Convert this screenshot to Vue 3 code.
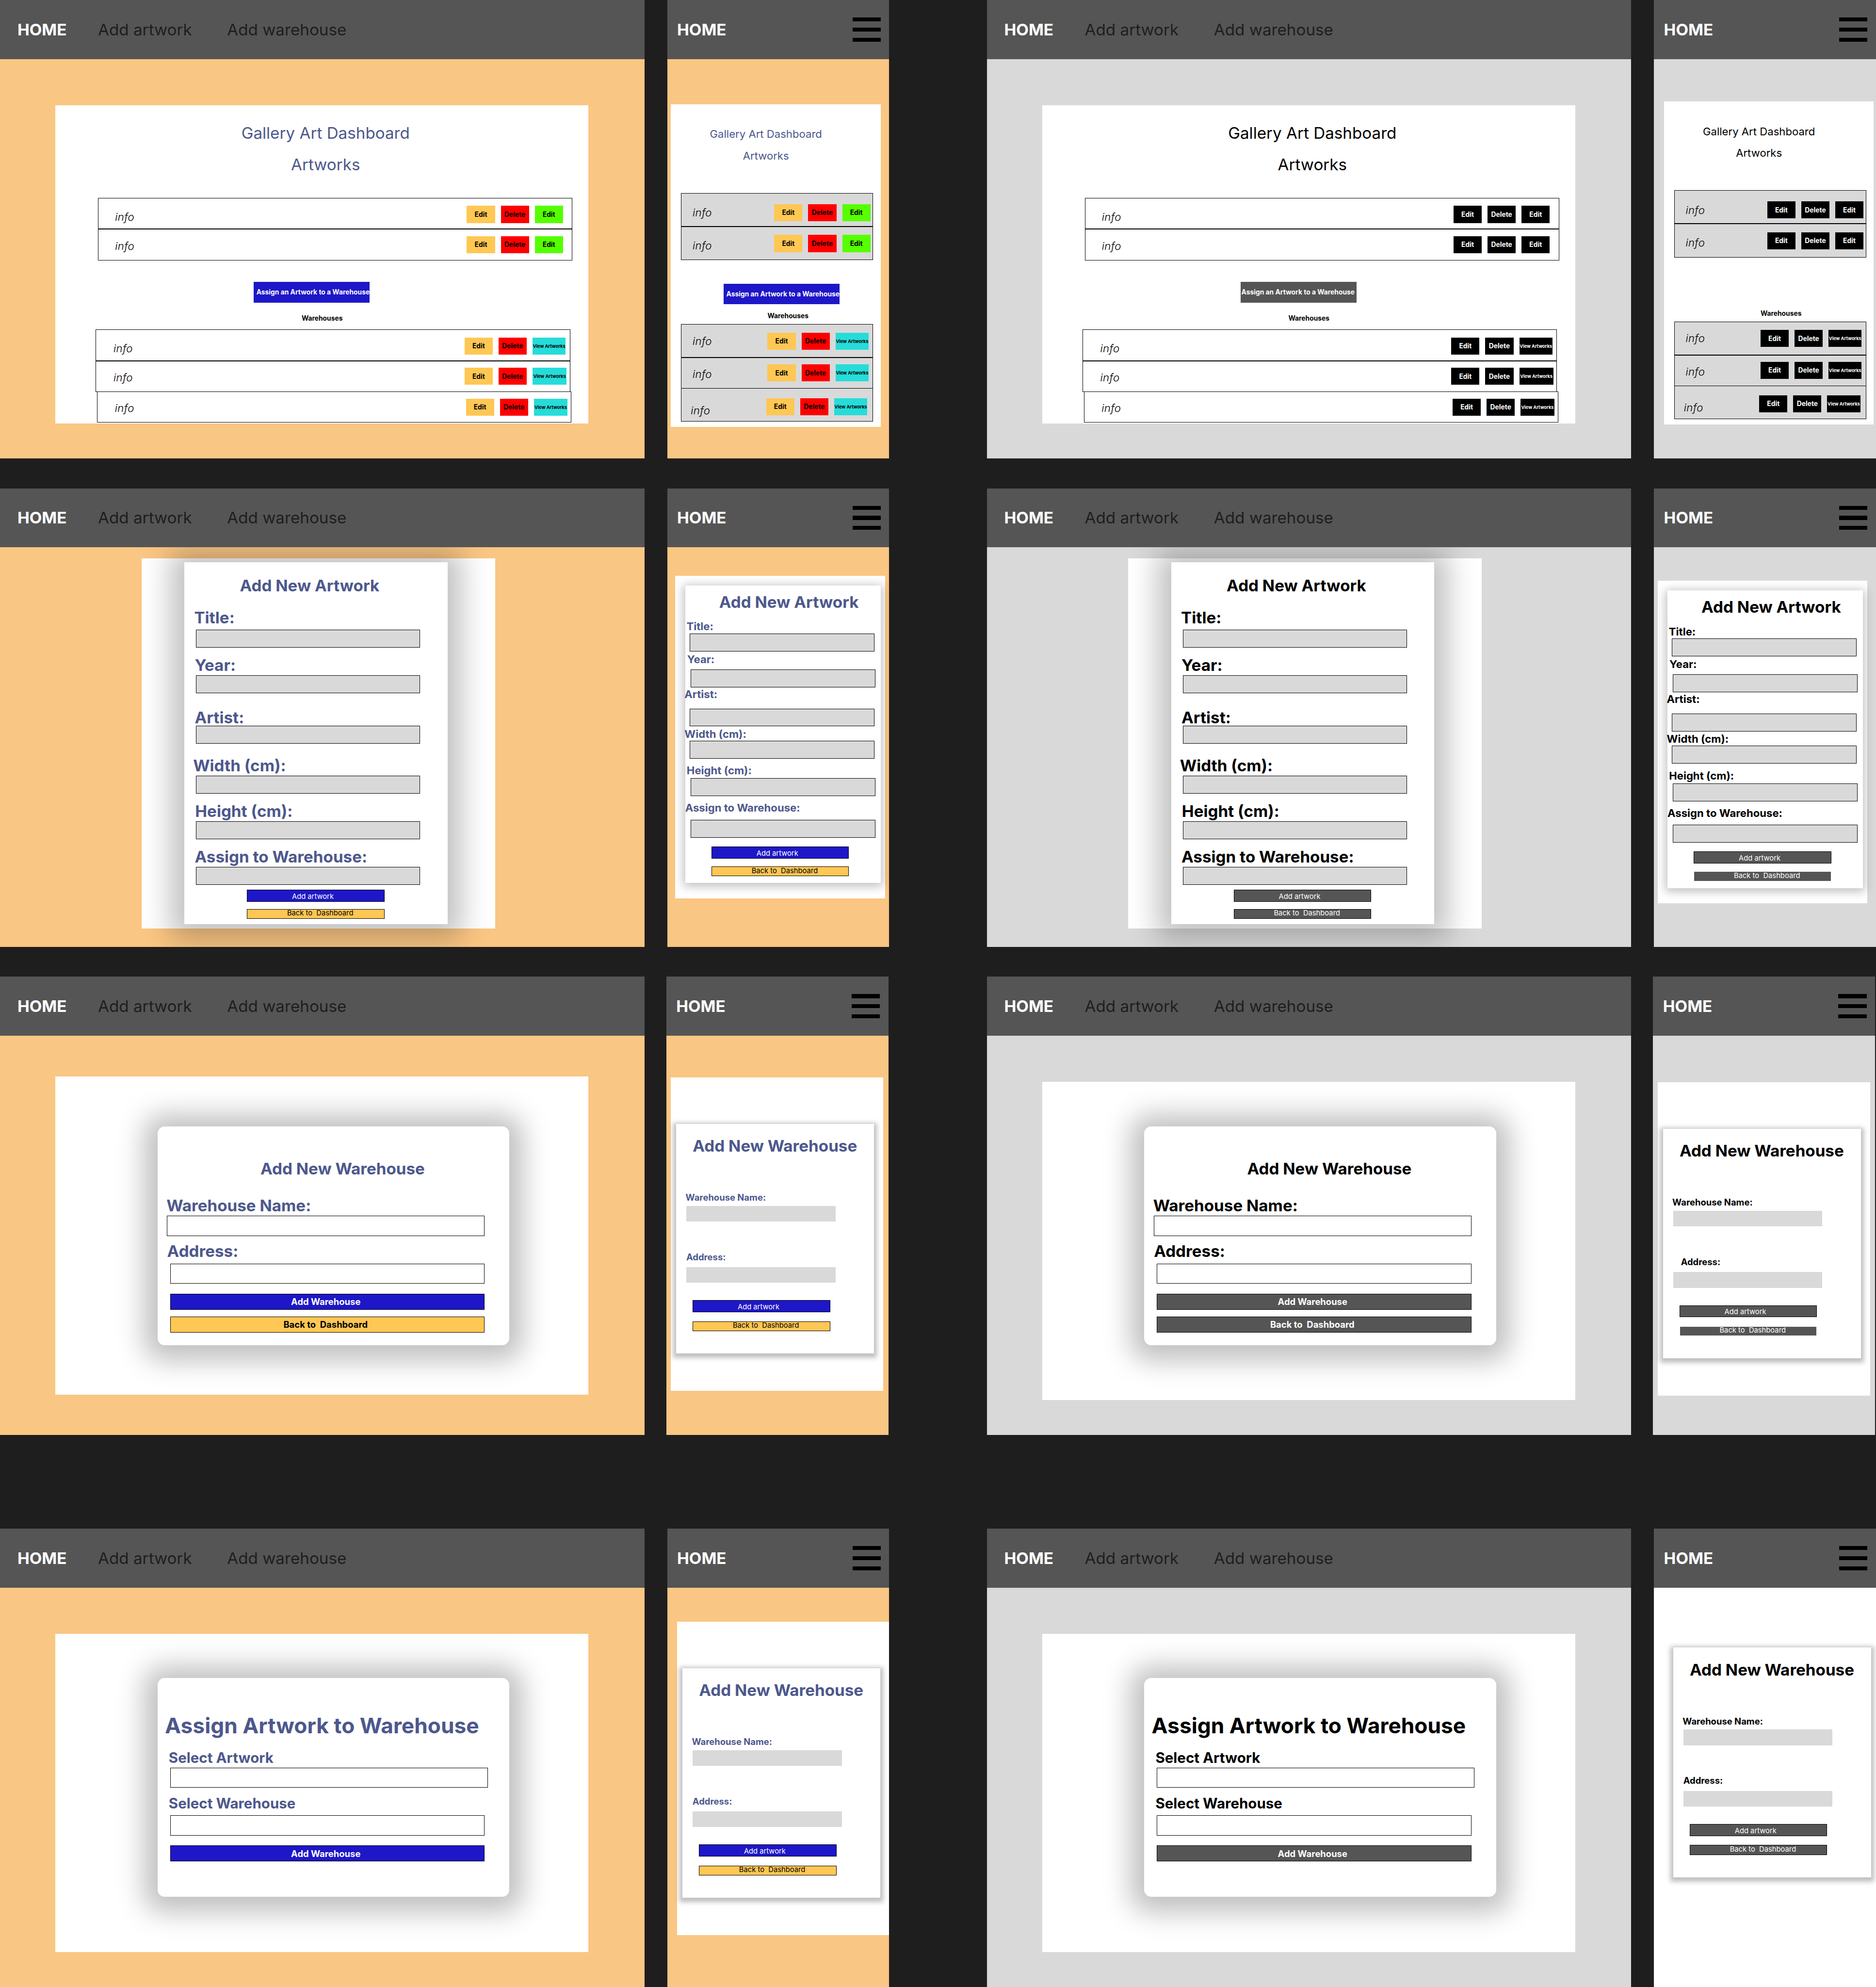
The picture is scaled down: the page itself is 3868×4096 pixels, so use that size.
<script setup>
const screens = ['dashboard', 'artwork', 'warehouse', 'assign']
const themes = ['color', 'mono']

const artworkFields = ['Title:', 'Year:', 'Artist:', 'Width (cm):', 'Height (cm):', 'Assign to Warehouse:']
const warehouseFields = ['Warehouse Name:', 'Address:']
const assignFields = ['Select Artwork', 'Select Warehouse']

const desktopForms = {
  artwork: {
    title: 'Add New Artwork',
    fields: artworkFields,
    actions: ['Add artwork', 'Back to  Dashboard'],
  },
  warehouse: {
    title: 'Add New Warehouse',
    fields: warehouseFields,
    actions: ['Add Warehouse', 'Back to  Dashboard'],
  },
  assign: {
    title: 'Assign Artwork to Warehouse',
    fields: assignFields,
    actions: ['Add Warehouse'],
  },
}

const mobileWarehouse = {
  title: 'Add New Warehouse',
  fields: warehouseFields,
  actions: ['Add artwork', 'Back to  Dashboard'],
}

const mobileForms = {
  artwork: desktopForms.artwork,
  warehouse: mobileWarehouse,
  assign: mobileWarehouse,
}

const devices = [
  { name: 'desktop', forms: desktopForms },
  { name: 'mobile', forms: mobileForms },
]

const showAssign = (device, theme) => !(device === 'mobile' && theme === 'mono')
</script>

<template>
  <main class="board">
    <section v-for="screen in screens" :key="screen" class="row" :class="screen">
      <div v-for="theme in themes" :key="theme" class="pair" :class="theme">
        <article v-for="device in devices" :key="device.name" class="frame" :class="device.name">
          <header class="nav">
            <strong class="home">HOME</strong>
            <template v-if="device.name === 'desktop'">
              <a class="link first">Add artwork</a>
              <a class="link">Add warehouse</a>
            </template>
            <span v-else class="menu"><i></i><i></i><i></i></span>
          </header>

          <div v-if="screen === 'dashboard'" class="panel">
            <h1 class="heading">Gallery Art Dashboard</h1>
            <h2 class="heading sub">Artworks</h2>
            <ul class="list artworks">
              <li v-for="n in 2" :key="n" class="item">
                <em class="info">info</em>
                <button class="btn yellow">Edit</button>
                <button class="btn red">Delete</button>
                <button class="btn green">Edit</button>
              </li>
            </ul>
            <button v-if="showAssign(device.name, theme)" class="assign-btn">Assign an Artwork to a Warehouse</button>
            <h3 class="caption">Warehouses</h3>
            <ul class="list houses">
              <li v-for="n in 3" :key="n" class="item">
                <em class="info">info</em>
                <button class="btn yellow">Edit</button>
                <button class="btn red">Delete</button>
                <button class="btn view">View Artworks</button>
              </li>
            </ul>
          </div>

          <div v-else class="panel">
            <form class="card">
              <h1 class="title">{{ device.forms[screen].title }}</h1>
              <div v-for="field in device.forms[screen].fields" :key="field" class="field">
                <label class="label">{{ field }}</label>
                <span class="input"></span>
              </div>
              <div
                v-for="(action, i) in device.forms[screen].actions"
                :key="action"
                class="action"
                :class="i ? 'back' : 'submit'"
              ><span class="action-text">{{ action }}</span></div>
            </form>
          </div>
        </article>
      </div>
    </section>
  </main>
</template>

<style>
body {
  margin: 0;
  background: #1e1e1e;
  overflow: hidden;
}
</style>

<style scoped>
.board {
  zoom: 0.92272;
  width: 4192px;
  height: 4439px;
  overflow: hidden;
  background: #1e1e1e;
  font-family: Inter, 'Liberation Sans', sans-serif;
  color: #000;
  white-space: pre;
}
.board * { box-sizing: border-box; }
h1, h2, h3, ul { margin: 0; padding: 0; list-style: none; }
button { border: 0; padding: 0; font-family: inherit; color: inherit; white-space: pre; }

/* board grid */
.row { display: flex; height: 1024px; gap: 218px; margin-bottom: 67px; }
.row.warehouse { gap: 220px; margin-bottom: 209px; }
.pair { display: flex; gap: 51px; }
.warehouse .pair { gap: 49px; }
.frame { height: 1024px; overflow: hidden; display: flex; flex-direction: column; align-items: flex-start; flex: none; }
.desktop { width: 1440px; }
.mobile { width: 496px; }
.color .frame { background: #fac683; }
.mono .frame { background: #d9d9d9; }
.assign .mono .mobile { background: #fff; }

/* navigation */
.nav {
  display: flex; align-items: center; width: 100%; height: 132px; flex: none;
  background: #555; font-size: 36px; line-height: 44px; padding-left: 39px;
  position: relative; z-index: 1;
}
.home { width: 180px; color: #fff; font-weight: 700; }
.link { font-weight: 400; color: #1e1e1e; }
.link.first { width: 288.5px; }
.mobile .nav { padding: 0 19px 0 22px; justify-content: space-between; }
.menu { display: flex; flex-direction: column; gap: 13.5px; width: 63px; }
.menu i { height: 9px; background: #000; }

/* panels */
.panel { background: #fff; display: flex; flex-direction: column; align-items: flex-start; flex: none; }
.desktop .panel { width: 1191px; height: 711px; margin: 103px 0 0 124px; }
.artwork .desktop .panel { width: 790px; height: 827px; margin: 24px 0 0 316px; }
.warehouse .desktop .panel { margin-top: 91px; }
.warehouse .mono.pair .desktop .panel { margin-top: 103px; }
.dashboard .mobile .panel { width: 469px; height: 721px; margin: 101px 0 0 8px; }
.dashboard .mono .mobile .panel { margin: 95px 0 0 22px; }
.artwork .mobile .panel { width: 469px; height: 721px; margin: 63px 0 0 18px; }
.artwork .mono .mobile .panel { margin: 74px 0 0 8px; }
.warehouse .mobile .panel { width: 475px; height: 700px; margin: 93px 0 0 10px; }
.warehouse .mono .mobile .panel { margin-top: 104px; }
.assign .mobile .panel { width: 475px; height: 700px; margin: 76px 0 0 22px; }
.assign .mono .mobile .panel { margin: 30px 0 0 31px; }

/* dashboard */
.heading { font-weight: 400; width: 100%; text-align: center; font-size: 36px; line-height: 44px; padding-left: 16px; margin-top: 40px; }
.heading.sub { margin-top: 26.5px; }
.mobile .heading { font-size: 24px; line-height: 29px; padding: 0 44px 0 0; margin-top: 52.5px; }
.mobile .heading.sub { margin-top: 19px; }
.color .heading, .color .title, .color .label { color: #4d588c; }

.list { width: 1060px; }
.artworks { margin: 52.5px 0 0 95px; }
.houses { margin: 15.5px 0 0 90px; }
.item { display: flex; align-items: flex-start; gap: 13px; height: 70px; padding-top: 15px; border: 1px solid #000; background: #fff; }
.item:first-child { padding-top: 17px; }
.houses .item:nth-child(3) { margin: -1.5px -3px 0 3px; }
.info { flex: none; width: 810px; padding-left: 37px; margin-top: 7px; font-size: 24px; line-height: 29px; font-weight: 300; letter-spacing: 0.4px; }
.houses .info { padding-left: 38.5px; }
.item:first-child .info { margin-top: 10.5px; }
.btn { width: 63px; height: 38px; flex: none; font-size: 15px; font-weight: 700; line-height: 18px; display: flex; align-items: center; justify-content: center; }
.view { width: 74px; font-size: 10px; line-height: 12px; }
.desktop .item:nth-child(2) .view { width: 76px; }
.desktop .item:nth-child(3) .view { width: 75px; }
.yellow { background: #ffc753; }
.red { background: #f00; }
.green { background: #5f0; }
.view { background: #26dcd9; }
.mono .btn { background: #000; color: #fff; }
.assign-btn { width: 259px; height: 46px; margin: 48px 0 0 443px; padding-left: 6px; text-align: left; background: #1e17c8; color: #fff; font-size: 15px; font-weight: 700; line-height: 18px; }
.mono .assign-btn { background: #555; padding-left: 2px; }
.caption { font-size: 15px; line-height: 18px; font-weight: 700; margin: 26.5px 0 0 550px; }

.mobile .list { width: 429px; margin-left: 23px; }
.mobile .artworks { margin-top: 68.5px; }
.mobile .houses { margin-top: 9px; }
.mobile .item { height: 75px; background: #d9d9d9; padding-top: 18px; }
.mobile .item:first-child { padding-top: 24px; }
.mobile .info { width: 194px; padding-left: 24.5px; margin-top: 9px; }
.mobile .item:first-child .info { margin-top: 5px; }
.mobile .houses .info { width: 179px; }
.mobile .houses .item:first-child { padding-top: 18px; }
.mobile .houses .item:first-child .info { margin-top: 4px; }
.mobile .houses .item:nth-child(2) { padding-top: 14px; }
.mobile .houses .item:nth-child(2) .info { margin-top: 7.5px; }
.mobile .houses .item:nth-child(3) { padding-top: 21px; margin: -7px 0 0; }
.mobile .houses .item:nth-child(3) .info { width: 176px; padding-left: 20.5px; margin-top: 13px; }
.mobile .view.view { width: 74px; }
.mobile .assign-btn { margin: 53px 0 0 118px; }
.mobile .caption { margin: 17.3px 0 0 216px; }
.mono .mobile .caption { margin-top: 116.3px; }

/* form cards */
.card { background: #fff; display: flex; flex-direction: column; align-items: flex-start; flex: none; }
.title { font-weight: 700; font-size: 36px; line-height: 44px; height: 44px; padding-top: 1px; }
.field { display: flex; flex-direction: column; align-items: flex-start; }
.label { font-weight: 700; font-size: 36px; line-height: 44px; height: 44px; padding-top: 0.5px; }
.input { border: 1px solid #000; }
.action { border: 1px solid #000; display: flex; justify-content: center; align-items: center; font-size: 16px; line-height: 19px; width: 307px; }
.submit { background: #1e17c8; color: #fff; height: 27px; }
.back { background: #ffc753; color: #000; height: 22px; }
.mono .action { background: #555; color: #fff; }
.submit .action-text { margin: 5px 13px 0 0; }
.back .action-text { margin: -2px 0 0 20px; }

/* add artwork, desktop */
.artwork .desktop .card { width: 588px; height: 809px; margin: 9px 0 0 96px; box-shadow: 0 4px 60px 30px rgba(0, 0, 0, 0.25); }
.artwork .desktop .title { margin: 29.5px 0 0 124px; }
.artwork .desktop .input { width: 501px; height: 40px; background: #d9d9d9; margin: 1px 0 0 26px; }
.artwork .desktop .label { margin-left: 23px; }
.artwork .desktop .field { margin-top: 17px; }
.artwork .desktop .field:nth-of-type(1) { margin-top: 27.5px; }
.artwork .desktop .field:nth-of-type(1) .label { margin-left: 22px; }
.artwork .desktop .field:nth-of-type(1) .input { margin-top: 6px; }
.artwork .desktop .field:nth-of-type(3) { margin-top: 31.5px; }
.artwork .desktop .field:nth-of-type(3) .input { margin-top: -3.5px; }
.artwork .desktop .field:nth-of-type(4) { margin-top: 27px; }
.artwork .desktop .field:nth-of-type(4) .label { margin-left: 19.5px; }
.artwork .desktop .field:nth-of-type(5) .label { margin-left: 24px; }
.artwork .desktop .action { margin-left: 140px; }
.artwork .desktop .submit { margin-top: 11px; }
.artwork .desktop .back { margin-top: 16px; }

/* add artwork, mobile */
.artwork .mobile .card { width: 437px; height: 665px; margin: 22px 0 0 22px; box-shadow: 0 4px 20px 4px rgba(0, 0, 0, 0.25); }
.artwork .mobile .title { margin: 14.5px 0 0 76px; }
.artwork .mobile .label { font-size: 24px; line-height: 29px; height: 29px; }
.artwork .mobile .input { width: 413px; height: 40px; background: #d9d9d9; margin-left: 10px; }
.artwork .mobile .field:nth-of-type(1) { margin-top: 18.5px; }
.artwork .mobile .field:nth-of-type(1) .label { margin-left: 3px; }
.artwork .mobile .field:nth-of-type(1) .input { margin-top: 1px; }
.artwork .mobile .field:nth-of-type(2) { margin-top: 3.5px; }
.artwork .mobile .field:nth-of-type(2) .label { margin-left: 4.5px; }
.artwork .mobile .field:nth-of-type(2) .input { margin: 8.5px 0 0 12px; }
.artwork .mobile .field:nth-of-type(3) .label { margin-left: -1.5px; }
.artwork .mobile .field:nth-of-type(3) .input { margin-top: 18px; }
.artwork .mobile .field:nth-of-type(4) { margin-top: 2.5px; }
.artwork .mobile .field:nth-of-type(4) .label { margin-left: -1.5px; }
.artwork .mobile .field:nth-of-type(4) .input { margin-top: 0.5px; }
.artwork .mobile .field:nth-of-type(5) { margin-top: 12px; }
.artwork .mobile .field:nth-of-type(5) .label { margin-left: 3.5px; }
.artwork .mobile .field:nth-of-type(5) .input { margin: 3px 0 0 12px; }
.artwork .mobile .field:nth-of-type(6) { margin-top: 11.5px; }
.artwork .mobile .field:nth-of-type(6) .input { margin: 12.5px 0 0 12px; }
.artwork .mobile .action { margin-left: 59px; }
.artwork .mobile .submit { margin-top: 19px; }
.artwork .mobile .back { margin-top: 18px; }

/* warehouse and assign, desktop */
.warehouse .desktop .card, .assign .desktop .card {
  width: 786px; height: 489px; border-radius: 16px; margin: 111px 0 0 228px;
  box-shadow: 0 4px 60px 30px rgba(0, 0, 0, 0.25);
}
.warehouse .mono .desktop .card { margin-top: 99px; }
.assign .desktop .card { margin-top: 99px; }
.warehouse .desktop .title { margin: 73px 0 0 230px; padding-top: 0; }
.warehouse .desktop .label { margin-left: 20px; padding-top: 1px; }
.warehouse .desktop .field:nth-of-type(2) .label { margin-left: 21.5px; }
.warehouse .desktop .input, .assign .desktop .input { height: 45px; }
.warehouse .desktop .field:nth-of-type(1) { margin-top: 38px; }
.warehouse .desktop .field:nth-of-type(1) .input { width: 710px; margin: 1px 0 0 21px; }
.warehouse .desktop .field:nth-of-type(2) { margin-top: 11px; }
.warehouse .desktop .field:nth-of-type(2) .input { width: 703px; margin: 7px 0 0 28px; }
.warehouse .desktop .action, .assign .desktop .action { width: 703px; height: 36px; margin: 22px 0 0 28px; font-size: 20px; font-weight: 700; line-height: 24px; }
.warehouse .desktop .back { margin-top: 15px; }
.warehouse .desktop .submit .action-text, .assign .desktop .submit .action-text { margin: 0 7px 0 0; }
.warehouse .desktop .back .action-text { margin: 0 8px 0 0; }

.assign .desktop .title { font-size: 48px; line-height: 58px; height: 58px; margin: 77px 0 0 16.5px; }
.assign .desktop .label { font-size: 32px; line-height: 39px; height: 39px; margin-left: 25px; padding-top: 0; }
.assign .desktop .field:nth-of-type(1) { margin-top: 22.5px; }
.assign .desktop .field:nth-of-type(1) .input { width: 710px; margin: 3.5px 0 0 28px; }
.assign .desktop .field:nth-of-type(2) { margin-top: 15px; }
.assign .desktop .field:nth-of-type(2) .input { width: 703px; margin: 8px 0 0 28px; }

/* warehouse and assign, mobile */
.warehouse .mobile .card, .assign .mobile .card {
  width: 442px; height: 513px; margin: 104px 0 0 12px;
  box-shadow: 0 4px 10px 6px rgba(0, 0, 0, 0.25);
}
.warehouse .mobile .title, .assign .mobile .title { margin: 26.5px 0 0 37px; }
.warehouse .mobile .label, .assign .mobile .label { font-size: 20px; line-height: 24px; height: 24px; margin-left: 21px; padding-top: 0; }
.warehouse .mobile .input, .assign .mobile .input { width: 333px; height: 35px; border: 0; background: #d9d9d9; margin: 7px 0 0 23px; }
.warehouse .mobile .field:nth-of-type(1), .assign .mobile .field:nth-of-type(1) { margin-top: 81.5px; }
.warehouse .mobile .field:nth-of-type(2), .assign .mobile .field:nth-of-type(2) { margin-top: 67px; }
.warehouse .mobile .field:nth-of-type(2) .label, .assign .mobile .field:nth-of-type(2) .label { margin-left: 22.5px; }
.warehouse .mobile .field:nth-of-type(2) .input, .assign .mobile .field:nth-of-type(2) .input { margin-top: 11px; }
.warehouse .mono .mobile .field:nth-of-type(2) .label { margin-left: 40px; }
.warehouse .mobile .action, .assign .mobile .action { margin-left: 37px; }
.warehouse .mobile .submit, .assign .mobile .submit { margin-top: 39px; }
.warehouse .mobile .back, .assign .mobile .back { margin-top: 20px; }
.artwork .mono .mobile .back, .warehouse .mono .mobile .back { border-color: #fff; }
</style>
